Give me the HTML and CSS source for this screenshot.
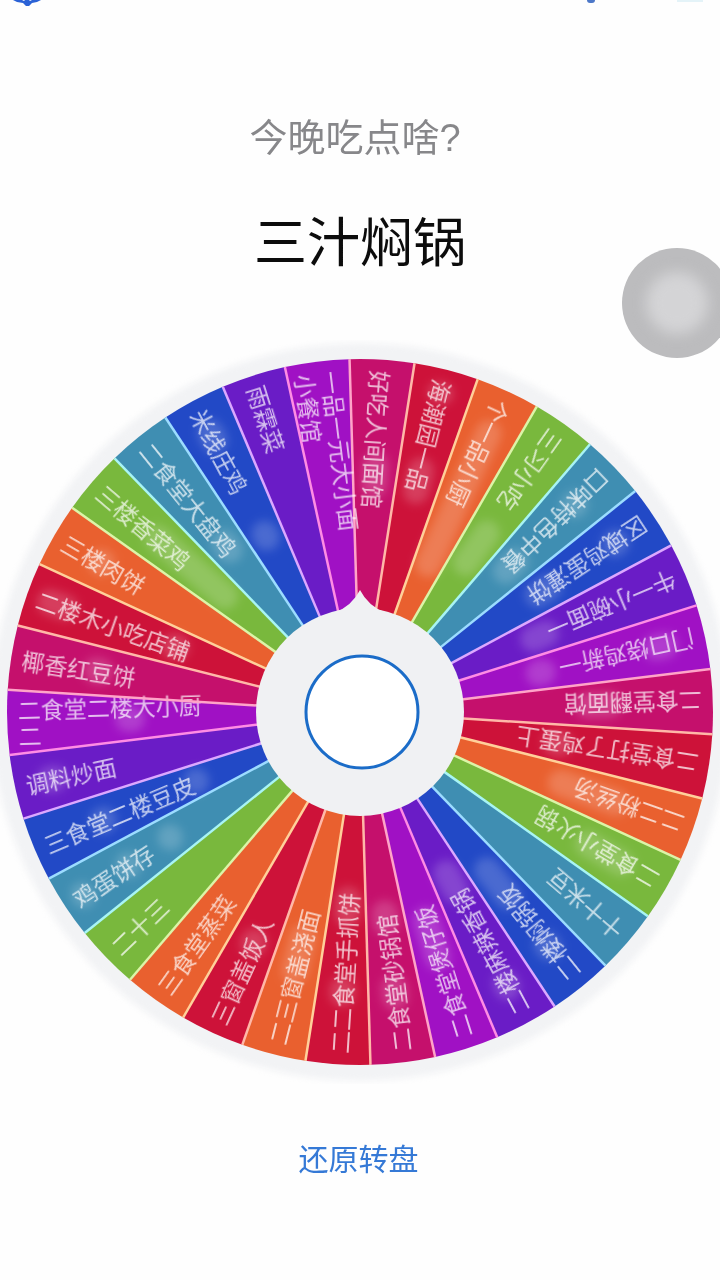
FILE: index.html
```html
<!DOCTYPE html>
<html lang="zh-CN">
<head>
    <meta charset="UTF-8">
    <meta name="viewport" content="width=device-width, initial-scale=1.0">
    <title>今晚吃点啥</title>
    <link rel="stylesheet" href="styles.css">
</head>
<body>
    <div class="status-bar">
        <svg class="status-left" width="32" height="6" viewBox="0 0 32 6">
            <path d="M2 0h9l2 1 1-1h4l1 1 2-1h9l-4 2-5 1-3 3h-3l-3-3-6-1z"/>
        </svg>
        <span class="status-dot"></span>
        <span class="status-line"></span>
    </div>

    <main class="page">
        <p class="question">今晚吃点啥?</p>
        <h1 class="answer">三汁焖锅</h1>

        <div class="wheel-box">
            <svg id="wheel" class="wheel" width="744" height="744" viewBox="-372 -372 744 744"></svg>
        </div>

        <button class="reset-btn">还原转盘</button>
    </main>

    <!-- Floating button, sits on the right edge over the page -->
    <div class="float-btn"><span class="float-btn-core"></span></div>

    <script src="script.js"></script>
</body>
</html>
```

FILE: styles.css
```css
/* Global Styles */
html, body {
    margin: 0;
    padding: 0;
    height: 1280px;
    overflow: hidden;
}

body {
    position: relative;
    background-color: #fefefe;
    font-family: "Liberation Sans", "Noto Sans CJK SC", sans-serif;
}

/* Cut off status bar at the very top */
.status-bar {
    display: flex;
    align-items: flex-start;
    height: 6px;
    padding-left: 11px;
    overflow: hidden;
}

.status-left {
    fill: #2b62d6;
    filter: blur(0.5px);
}

.status-dot {
    width: 8px;
    height: 3px;
    margin-left: 544px;
    border-radius: 0 0 5px 5px;
    background-color: #4d78c8;
}

.status-line {
    width: 26px;
    height: 2px;
    margin-left: 82px;
    background-color: #e4f3f8;
}

.page {
    display: flex;
    flex-direction: column;
    align-items: center;
}

.question {
    margin: 112px 10px 0 0;
    font-size: 38px;
    line-height: 40px;
    color: #87878a;
    filter: blur(0.5px);
}

.answer {
    margin: 56px 0 0;
    font-size: 53px;
    line-height: 60px;
    font-weight: normal;
    color: #0c0c0c;
    filter: blur(0.4px);
}

/* Wheel is wider than the page, the ring runs off both sides */
.wheel-box {
    display: flex;
    justify-content: center;
    width: 100%;
    margin-top: 66px;
}

.wheel {
    flex-shrink: 0;
}

.wheel-ring {
    fill: #f2f3f5;
    filter: blur(3px);
}

.sector-label {
    font-family: "Noto Sans CJK SC", sans-serif;
    font-size: 23px;
    fill: #ffffff;
    fill-opacity: 0.72;
    dominant-baseline: central;
    filter: blur(0.6px);
}

.sector-blob {
    fill: #ffffff;
    fill-opacity: 0.18;
    filter: blur(5px);
}

.sector-line {
    stroke-width: 2.5;
}

.wheel-hub {
    fill: #f0f1f3;
}

.wheel-knob {
    fill: #ffffff;
    stroke: #1b6cc8;
    stroke-width: 3;
}

.reset-btn {
    margin-top: 53px;
    margin-right: 3px;
    padding: 0;
    border: none;
    background: none;
    font-family: "Noto Sans CJK SC", sans-serif;
    font-size: 30px;
    line-height: 40px;
    color: #3579d6;
    filter: blur(0.4px);
}

/* Floating button */
.float-btn {
    position: absolute;
    top: 248px;
    left: 622px;
    display: flex;
    align-items: center;
    justify-content: center;
    width: 110px;
    height: 110px;
    border-radius: 50%;
    background-color: #bcbcbe;
}

.float-btn-core {
    width: 62px;
    height: 62px;
    border-radius: 50%;
    background-color: #d4d4d6;
    filter: blur(7px);
}
```

FILE: script.js
```js
const SVG_NS = 'http://www.w3.org/2000/svg';

const OUTER_R = 353;
const HUB_R = 104;
const START_ANGLE = -1.7;

// Fill and divider colour of each sector type
const COLORS = {
    crimson: ['#c5106c', '#ffa4c8'],
    red: ['#cd1239', '#ffb8a8'],
    orange: ['#e9602f', '#ffd09a'],
    green: ['#79b83d', '#dcf4a8'],
    teal: ['#3f8eb2', '#a8f4f4'],
    blue: ['#2249c6', '#9cdcff'],
    violet: ['#6a1cc6', '#dca8ff'],
    purple: ['#a011c4', '#ff8ce4']
};

// Clockwise from the top. label, colour, blurred patches as [inner r, outer r]
// "|" splits a label in two lines
const SECTORS = [
    ['好吃人间面馆', 'crimson', [[215, 260]]],
    ['海潮园一品', 'red', [[215, 262], [318, 340]]],
    ['个一品小厨', 'orange', [[150, 320]]],
    ['三习小吃', 'green', [[170, 232]]],
    ['口味特色中餐', 'teal', [[190, 230], [285, 312]]],
    ['区域鸡蛋灌饼', 'blue', [[292, 320], [200, 240]]],
    ['牛一小碗面一', 'violet', [[175, 215]]],
    ['门口烧鸡新一', 'purple', [[290, 325], [170, 200]]],
    ['二食堂翻面馆', 'crimson', [[215, 262]]],
    ['二食堂打了鸡蛋上', 'red', [[185, 215]]],
    ['二二粉丝汤', 'orange', [[200, 285]]],
    ['二食堂小火锅', 'green', [[250, 315]]],
    ['十十米豆', 'teal', []],
    ['二楼焖锅饭', 'blue', [[285, 315], [190, 250]]],
    ['二楼麻辣香锅', 'violet', [[295, 325], [170, 215]]],
    ['二食堂煲仔饭', 'purple', [[205, 270]]],
    ['二食堂砂锅馆', 'crimson', [[265, 300], [190, 225]]],
    ['二二食堂手抓饼', 'red', [[265, 295], [175, 215]]],
    ['二三窗盖浇面', 'orange', [[220, 280]]],
    ['三窗盖饭人', 'red', [[240, 268]]],
    ['三食堂蒸菜', 'orange', []],
    ['二十三', 'green', []],
    ['鸡蛋饼存', 'teal', [[320, 344], [265, 290], [215, 240]]],
    ['三食堂二楼豆皮', 'blue', [[265, 292], [165, 190]]],
    ['调料炒面', 'violet', [[300, 330]]],
    ['二食堂二楼大小厨|二', 'purple', [[215, 245]]],
    ['椰香红豆饼', 'crimson', [[250, 280]]],
    ['二楼木小吃店铺', 'red', [[300, 342], [182, 210]]],
    ['三楼肉饼', 'orange', [[285, 312]]],
    ['三楼香菜鸡', 'green', [[165, 280]]],
    ['二食堂大盘鸡', 'teal', [[195, 230]]],
    ['米线庄鸡', 'blue', [[295, 330], [185, 215]]],
    ['雨霖菜', 'violet', []],
    ['一品一元大小面|小餐馆', 'purple', []]
];

function make(tag, attrs, text) {
    const el = document.createElementNS(SVG_NS, tag);
    Object.keys(attrs).forEach((key) => el.setAttribute(key, attrs[key]));
    if (text) el.textContent = text;
    return el;
}

function polar(r, deg) {
    const rad = deg * Math.PI / 180;
    return [r * Math.sin(rad), -r * Math.cos(rad)];
}

function drawWheel() {
    const wheel = document.getElementById('wheel');
    const step = 360 / SECTORS.length;

    wheel.appendChild(make('circle', { class: 'wheel-ring', r: 369 }));

    // Wedges first, so the dividers and labels stay on top of them
    SECTORS.forEach((sector, i) => {
        const from = polar(OUTER_R, START_ANGLE + i * step);
        const to = polar(OUTER_R, START_ANGLE + (i + 1) * step);
        wheel.appendChild(make('path', {
            d: `M0 0L${from[0]} ${from[1]}A${OUTER_R} ${OUTER_R} 0 0 1 ${to[0]} ${to[1]}Z`,
            fill: COLORS[sector[1]][0]
        }));
    });

    SECTORS.forEach((sector, i) => {
        const mid = START_ANGLE + (i + 0.5) * step;

        sector[2].forEach((blob) => {
            wheel.appendChild(make('rect', {
                class: 'sector-blob',
                x: -13,
                y: -blob[1],
                width: 26,
                height: blob[1] - blob[0],
                rx: 13,
                transform: `rotate(${mid})`
            }));
        });

        const lines = sector[0].split('|');
        lines.forEach((line, n) => {
            const shift = lines.length > 1 ? (n === 0 ? -13 : 13) : 0;
            wheel.appendChild(make('text', {
                class: 'sector-label',
                y: shift,
                transform: `rotate(${mid}) translate(0 ${-OUTER_R + 11}) rotate(90)`
            }, line));
        });

        const a = polar(HUB_R - 4, START_ANGLE + i * step);
        const b = polar(OUTER_R, START_ANGLE + i * step);
        wheel.appendChild(make('line', {
            class: 'sector-line',
            x1: a[0], y1: a[1], x2: b[0], y2: b[1],
            stroke: COLORS[sector[1]][1]
        }));
    });

    // Hub with its pointer, then the knob
    wheel.appendChild(make('circle', { class: 'wheel-hub', r: HUB_R }));
    wheel.appendChild(make('path', {
        class: 'wheel-hub',
        d: 'M-26 -99Q-8 -106 0 -122Q8 -106 26 -99Z'
    }));
    wheel.appendChild(make('circle', { class: 'wheel-knob', cx: 2, r: 56 }));
}

document.addEventListener('DOMContentLoaded', drawWheel);
```
